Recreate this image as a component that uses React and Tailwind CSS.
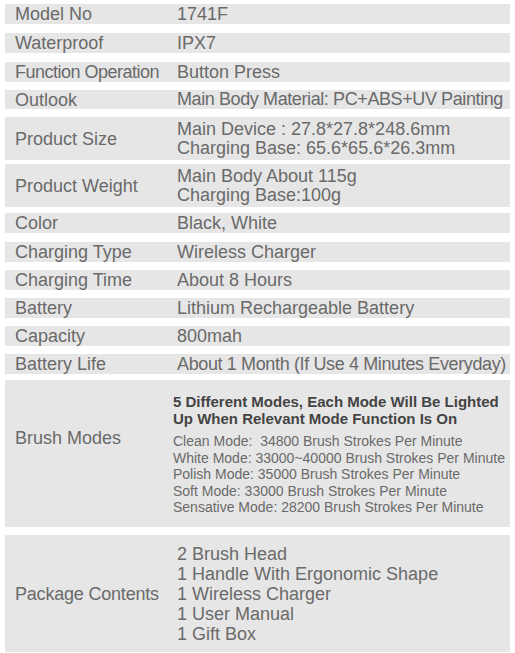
import React from "react";

const tight = "tracking-[-0.4px]";

const rows = [
  { label: "Model No", value: ["1741F"], mt: "mt-[4px]", h: "h-[20px]" },
  { label: "Waterproof", value: ["IPX7"], mt: "mt-[9px]", h: "h-[20px]" },
  { label: "Function Operation", labelCls: "tracking-[-0.5px]", value: ["Button Press"], mt: "mt-[9px]", h: "h-[20px]" },
  { label: "Outlook", value: ["Main Body Material: PC+ABS+UV Painting"], valueCls: tight, mt: "mt-[8px]", h: "h-[19px]" },
  {
    label: "Product Size",
    value: ["Main Device : 27.8*27.8*248.6mm", "Charging Base: 65.6*65.6*26.3mm"],
    mt: "mt-[8px]",
    h: "h-[43px]",
  },
  {
    label: "Product Weight",
    value: ["Main Body About 115g", "Charging Base:100g"],
    mt: "mt-[4px]",
    h: "h-[43px]",
  },
  { label: "Color", value: ["Black, White"], mt: "mt-[6px]", h: "h-[20px]" },
  { label: "Charging Type", value: ["Wireless Charger"], mt: "mt-[9px]", h: "h-[20px]" },
  { label: "Charging Time", value: ["About 8 Hours"], mt: "mt-[8px]", h: "h-[20px]" },
  { label: "Battery", value: ["Lithium Rechargeable Battery"], mt: "mt-[8px]", h: "h-[20px]" },
  { label: "Capacity", value: ["800mah"], mt: "mt-[8px]", h: "h-[20px]" },
  {
    label: "Battery Life",
    value: ["About 1 Month (If Use 4 Minutes Everyday)"],
    valueCls: "tracking-[-0.37px]",
    mt: "mt-[8px]",
    h: "h-[20px]",
  },
];

const modes = [
  "Clean Mode:  34800 Brush Strokes Per Minute",
  "White Mode: 33000~40000 Brush Strokes Per Minute",
  "Polish Mode: 35000 Brush Strokes Per Minute",
  "Soft Mode: 33000 Brush Strokes Per Minute",
  "Sensative Mode: 28200 Brush Strokes Per Minute",
];

const contents = [
  "2 Brush Head",
  "1 Handle With Ergonomic Shape",
  "1 Wireless Charger",
  "1 User Manual",
  "1 Gift Box",
];

function Row({ label, labelCls = "", value, valueCls = "", mt, h }) {
  return (
    <div className={`${mt} ${h} mx-[5px] bg-[#e6e6e6] flex items-center`}>
      <div className={`w-[172px] pl-[10px] shrink-0 whitespace-nowrap ${labelCls}`}>{label}</div>
      <div className={`whitespace-pre ${valueCls}`}>
        {value.map((v) => (
          <div key={v} className="leading-[19px]">
            {v}
          </div>
        ))}
      </div>
    </div>
  );
}

export default function App() {
  return (
    <div
      className="w-[515px] h-[653px] bg-white overflow-hidden text-[18px] leading-[20px] text-[#6a6a6a]"
      style={{ fontFamily: '"Liberation Sans", Arial, sans-serif' }}
    >
      {rows.map((r) => (
        <Row key={r.label} {...r} />
      ))}

      {/* Brush Modes */}
      <div className="mt-[6px] h-[147px] mx-[5px] bg-[#e6e6e6] flex items-center">
        <div className="w-[168px] pl-[10px] shrink-0 mb-[32px]">Brush Modes</div>
        <div className="mt-[2px]">
          <div className="text-[15px] leading-[17px] font-bold text-[#444]">
            <div>5 Different Modes, Each Mode Will Be Lighted</div>
            <div>Up When Relevant Mode Function Is On</div>
          </div>
          <div className="mt-[6px] text-[14px] leading-[16.5px] whitespace-pre">
            {modes.map((m) => (
              <div key={m}>{m}</div>
            ))}
          </div>
        </div>
      </div>

      {/* Package Contents */}
      <div className="mt-[8px] h-[117px] mx-[5px] bg-[#e6e6e6] flex items-center">
        <div className="w-[172px] pl-[10px] shrink-0 tracking-[-0.2px]">Package Contents</div>
        <div>
          {contents.map((c) => (
            <div key={c} className="leading-[20px]">
              {c}
            </div>
          ))}
        </div>
      </div>
    </div>
  );
}
